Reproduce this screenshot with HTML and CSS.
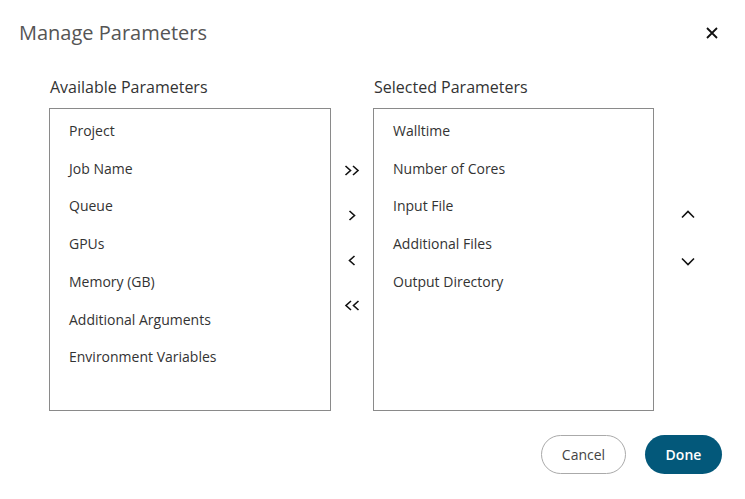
FILE: index.html
```html
<!DOCTYPE html>
<html lang="en">
<head>
    <meta charset="UTF-8">
    <meta name="viewport" content="width=device-width, initial-scale=1.0">
    <title>Manage Parameters</title>
    <link rel="stylesheet" href="styles.css">
</head>
<body>
    <div class="dialog">
        <div class="dialog-header">
            <h1>Manage Parameters</h1>
            <button class="close-btn" aria-label="Close">
                <svg width="14" height="14" viewBox="0 0 14 14"><path d="M2 2 L12 12 M12 2 L2 12" stroke="#111" stroke-width="1.8" fill="none"/></svg>
            </button>
        </div>
        <div class="picker">
            <div class="column">
                <h2>Available Parameters</h2>
                <ul class="param-list">
                    <li>Project</li>
                    <li>Job Name</li>
                    <li>Queue</li>
                    <li>GPUs</li>
                    <li>Memory (GB)</li>
                    <li>Additional Arguments</li>
                    <li>Environment Variables</li>
                </ul>
            </div>
            <div class="move-buttons">
                <button class="icon-btn" title="Add all">
                    <svg width="16" height="11" viewBox="0 0 16 11"><path d="M1.5 1 L6.5 5.5 L1.5 10 M9 1 L14 5.5 L9 10" stroke="#111" stroke-width="1.6" fill="none"/></svg>
                </button>
                <button class="icon-btn" title="Add">
                    <svg width="8" height="11" viewBox="0 0 8 11"><path d="M1.5 1 L6.5 5.5 L1.5 10" stroke="#111" stroke-width="1.6" fill="none"/></svg>
                </button>
                <button class="icon-btn" title="Remove">
                    <svg width="8" height="11" viewBox="0 0 8 11"><path d="M6.5 1 L1.5 5.5 L6.5 10" stroke="#111" stroke-width="1.6" fill="none"/></svg>
                </button>
                <button class="icon-btn" title="Remove all">
                    <svg width="16" height="11" viewBox="0 0 16 11"><path d="M7 1 L2 5.5 L7 10 M14.5 1 L9.5 5.5 L14.5 10" stroke="#111" stroke-width="1.6" fill="none"/></svg>
                </button>
            </div>
            <div class="column column-selected">
                <h2>Selected Parameters</h2>
                <ul class="param-list">
                    <li>Walltime</li>
                    <li>Number of Cores</li>
                    <li>Input File</li>
                    <li>Additional Files</li>
                    <li>Output Directory</li>
                </ul>
            </div>
            <div class="order-buttons">
                <button class="icon-btn" title="Move up">
                    <svg width="14" height="9" viewBox="0 0 14 9"><path d="M1 7.5 L7 1.5 L13 7.5" stroke="#111" stroke-width="1.6" fill="none"/></svg>
                </button>
                <button class="icon-btn" title="Move down">
                    <svg width="14" height="9" viewBox="0 0 14 9"><path d="M1 1.5 L7 7.5 L13 1.5" stroke="#111" stroke-width="1.6" fill="none"/></svg>
                </button>
            </div>
        </div>
        <div class="dialog-footer">
            <button class="btn btn-cancel">Cancel</button>
            <button class="btn btn-done">Done</button>
        </div>
    </div>
</body>
</html>
```
FILE: styles.css
```css
body {
    margin: 0;
    background: #fff;
    font-family: 'Open Sans', 'Noto Sans', sans-serif;
    color: #333;
}
button {
    font-family: inherit;
    cursor: pointer;
}
.dialog {
    width: 745px;
    height: 499px;
    box-sizing: border-box;
    padding: 19px 23px 0 19px;
}
.dialog-header {
    display: flex;
    justify-content: space-between;
    align-items: center;
    height: 28px;
}
.dialog-header h1 {
    margin: 0;
    font-size: 20px;
    font-weight: 400;
    line-height: 28px;
    color: #555;
}
.close-btn {
    border: none;
    background: none;
    padding: 0;
    width: 20px;
    height: 20px;
    display: flex;
    align-items: center;
    justify-content: center;
}
.picker {
    display: flex;
    margin-top: 29px;
    padding-left: 30px;
}
.column {
    width: 282px;
}
.column-selected {
    width: 281px;
}
.column h2 {
    margin: 0 0 10px 1px;
    font-size: 16px;
    font-weight: 400;
    line-height: 22px;
    color: #333;
}
.param-list {
    list-style-type: none;
    margin: 0;
    padding: 3px 0 0;
    height: 298px;
    border: 1px solid #8a8a8a;
}
.param-list li {
    padding: 9px 19px;
    font-size: 14px;
    line-height: 19.7px;
    color: #333;
}
.icon-btn {
    border: none;
    background: none;
    padding: 0;
    width: 30px;
    height: 45px;
    display: flex;
    align-items: center;
    justify-content: center;
}
.move-buttons {
    width: 42px;
    display: flex;
    flex-direction: column;
    align-items: center;
    padding-top: 72px;
}
.order-buttons {
    width: 67px;
    display: flex;
    flex-direction: column;
    align-items: center;
    padding-top: 116px;
    gap: 2px;
}
.dialog-footer {
    display: flex;
    justify-content: flex-end;
    gap: 19px;
    margin-top: 24px;
}
.btn {
    height: 39px;
    border-radius: 20px;
    font-size: 14px;
}
.btn-cancel {
    width: 85px;
    background: #fff;
    border: 1px solid #aaa;
    color: #444;
}
.btn-done {
    width: 77px;
    background: #03587a;
    border: none;
    color: #fff;
    font-weight: 600;
}
```
